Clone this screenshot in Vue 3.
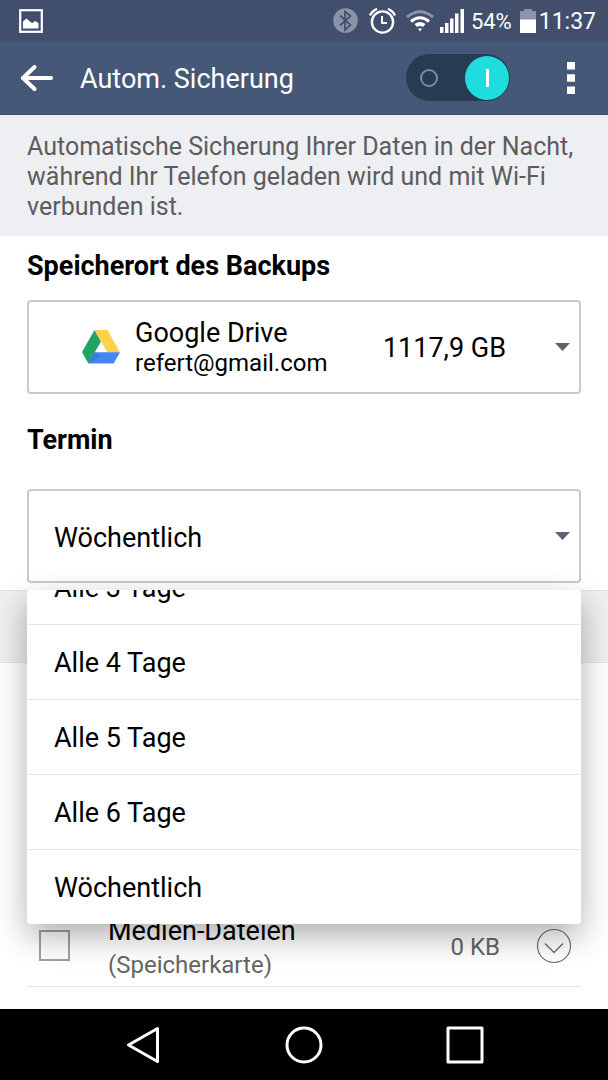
<script setup>
import { ref } from 'vue'

const enabled = ref(true)
const media = ref(false)
const open = ref(true)
const schedule = ref('Wöchentlich')
const options = ['Alle 3 Tage', 'Alle 4 Tage', 'Alle 5 Tage', 'Alle 6 Tage', 'Wöchentlich']

function pick(option) {
  schedule.value = option
  open.value = false
}
</script>

<template>
  <div class="screen">
    <div class="status">
      <svg class="picture" width="24" height="24" viewBox="0 0 24 24" aria-hidden="true">
        <rect x="1.2" y="1.2" width="21.6" height="21.6" fill="none" stroke="#fff" stroke-width="2.2" />
        <path d="M4 19.500V12.500L7.500 9.500l4.500 4 1.500.500L16 12l3.500 2v5.500z" fill="#fff" />
      </svg>
      <div class="indicators">
        <svg width="25" height="25" viewBox="0 0 25 25" aria-hidden="true">
          <circle cx="12.500" cy="12.500" r="12.300" fill="#8b93a8" />
          <path d="M7 7.500l10.500 9.500-5.500 5V3.500l5.500 4.500L7 17.500" fill="none" stroke="#414f6c" stroke-width="1.700" />
        </svg>
        <svg class="alarm" width="27" height="26" viewBox="0 0 27 26" fill="none" stroke="#fff" aria-hidden="true">
          <circle cx="13.500" cy="14" r="10.600" stroke-width="2.400" />
          <path d="M1 7.500Q3 3 8 1M26 7.500Q24 3 19 1" stroke-width="2.400" />
          <path d="M13 8v7h5" stroke-width="2" />
        </svg>
        <svg class="wifi" width="28" height="22" viewBox="0 0 28 22" fill="none" aria-hidden="true">
          <path d="M1 7Q14-3.500 27 7" stroke="#8b93a8" stroke-width="3" />
          <path d="M5 11.500Q14 4 23 11.500" stroke="#fff" stroke-width="3" />
          <path d="M8.500 14Q14 10 19.500 14L17 17Q14 15 11 17z" fill="#fff" />
          <path d="M12 18.500h4l-2 3z" fill="#fff" />
        </svg>
        <svg class="signal" width="24" height="24" viewBox="0 0 24 24" fill="#fff" aria-hidden="true">
          <path d="M0 18h3.500v6H0zM5 14h3.500v10H5zM10 9.500h3.500V24H10zM15 4.500h3.500V24H15zM20.500 0H24v24h-3.500z" />
        </svg>
        <span class="percent">54%</span>
        <svg class="battery" width="16" height="24" viewBox="0 0 16 24" aria-hidden="true">
          <path d="M0 2h4V0h8v2h4v9H0z" fill="#8b93a8" />
          <path d="M0 10.500h16V24H0z" fill="#fff" />
        </svg>
        <span class="clock">11:37</span>
      </div>
    </div>

    <header class="bar">
      <button class="icon-button" type="button" aria-label="Zurück">
        <svg width="34" height="28" viewBox="0 0 34 28" fill="none" stroke="#fff" stroke-width="4" stroke-linecap="round" aria-hidden="true">
          <path d="M14.500 3L3 14l11.500 11" stroke-linejoin="round" />
          <path d="M3 14h28" />
        </svg>
      </button>
      <h1>Autom. Sicherung</h1>
      <label class="switch">
        <input v-model="enabled" type="checkbox" role="switch" aria-label="Autom. Sicherung" />
        <span class="off-mark"></span>
        <span class="knob"></span>
      </label>
      <button class="icon-button more" type="button" aria-label="Weitere Optionen">
        <svg width="8" height="32" viewBox="0 0 8 32" fill="#fff" aria-hidden="true">
          <path d="M0 0h8v7.500H0zM0 12.200h8v7.600H0zM0 24.500h8V32H0z" />
        </svg>
      </button>
    </header>

    <main>
      <p class="intro">Automatische Sicherung Ihrer Daten in der Nacht, während Ihr Telefon geladen wird und mit Wi-Fi verbunden ist.</p>

      <section class="field">
        <h2 id="location">Speicherort des Backups</h2>
        <button class="box storage" type="button" aria-haspopup="listbox" aria-describedby="location">
          <svg width="38" height="34" viewBox="0 0 38 34" aria-hidden="true">
            <path d="M12.500 0L0 22l6.300 11.500L19 11.500z" fill="#1fa463" />
            <path d="M12.500 0h13L38 22.500H25.500z" fill="#ffd04b" />
            <path d="M12.500 22.300H38l-6.300 11.200H6.300z" fill="#4387f5" />
            <path d="M12.500 22.300l6 4.500-12.200 6.700z" fill="#3b78e0" />
          </svg>
          <span class="account">
            <span>Google Drive</span>
            <span class="mail">refert@gmail.com</span>
          </span>
          <span class="size">1117,9 GB</span>
          <span class="caret"></span>
        </button>
      </section>

      <section class="field schedule">
        <h2><label for="schedule">Termin</label></h2>
        <div class="anchor">
          <select id="schedule" v-model="schedule" class="box" @mousedown.prevent="open = !open">
            <option v-for="option in options" :key="option">{{ option }}</option>
          </select>
          <span class="caret"></span>
          <div v-if="open" class="popup">
            <div class="menu" role="listbox" aria-label="Termin">
              <button
                v-for="option in options"
                :key="option"
                type="button"
                role="option"
                :aria-selected="option === schedule"
                @click="pick(option)"
              >{{ option }}</button>
            </div>
          </div>
        </div>
      </section>

      <div class="divider"></div>

      <section class="items">
        <div class="item">
          <input id="media" v-model="media" type="checkbox" />
          <label for="media">Medien-Dateien<small>(Speicherkarte)</small></label>
          <span class="amount">0 KB</span>
          <button class="icon-button" type="button" aria-label="Details anzeigen">
            <svg width="36" height="36" viewBox="0 0 36 36" fill="none" stroke="#707070" aria-hidden="true">
              <circle cx="18" cy="18" r="16.500" stroke-width="1.200" />
              <path d="M9 15.500l9 9 9-9" stroke-width="1.500" />
            </svg>
          </button>
        </div>
      </section>
    </main>

    <nav class="keys">
      <button class="icon-button" type="button" aria-label="Zurück">
        <svg width="38" height="38" viewBox="0 0 38 38" fill="none" stroke="#fff" stroke-width="3" stroke-linejoin="round" aria-hidden="true">
          <path d="M33.500 2.500v33L4.500 19z" />
        </svg>
      </button>
      <button class="icon-button" type="button" aria-label="Startseite">
        <svg width="38" height="38" viewBox="0 0 38 38" fill="none" stroke="#fff" stroke-width="3" aria-hidden="true">
          <circle cx="19" cy="19" r="17" />
        </svg>
      </button>
      <button class="icon-button" type="button" aria-label="Übersicht">
        <svg width="38" height="38" viewBox="0 0 38 38" fill="none" stroke="#fff" stroke-width="3" stroke-linejoin="round" aria-hidden="true">
          <path d="M2 2h34v34H2z" />
        </svg>
      </button>
    </nav>
  </div>
</template>

<style>
body {
  margin: 0;
}
</style>

<style scoped>
* {
  box-sizing: border-box;
}

.screen {
  display: flex;
  flex-direction: column;
  min-height: 100vh;
  background: #fff;
  color: #000;
  font-family: Roboto, "Liberation Sans", sans-serif;
  font-size: 27px;
}

button,
select {
  font: inherit;
  color: inherit;
}

svg {
  display: block;
  flex: none;
}

.icon-button {
  display: block;
  padding: 0;
  border: 0;
  background: none;
}

.status {
  display: flex;
  align-items: center;
  justify-content: space-between;
  height: 41px;
  padding: 0 12px 0 19px;
  background: #414f6c;
  color: #fff;
}

.indicators {
  display: flex;
  align-items: center;
}

.alarm {
  margin-left: 11px;
}

.wifi {
  margin-left: 10px;
}

.signal {
  margin-left: 6px;
}

.percent {
  margin-left: 7px;
  padding-top: 2px;
  font-size: 22px;
}

.battery {
  margin-left: 8px;
}

.clock {
  margin-left: 3px;
  padding-top: 2px;
  font-size: 23px;
}

.bar {
  display: flex;
  align-items: center;
  height: 74px;
  padding: 0 33px 0 20px;
  border-bottom: 1px solid #3b4b6a;
  background: #465878;
  color: #fff;
}

h1 {
  flex: 1;
  margin: 0 0 0 26px;
  padding-top: 2px;
  font-size: 27px;
  font-weight: 400;
  line-height: 32px;
}

.switch {
  display: flex;
  align-items: center;
  justify-content: space-between;
  position: relative;
  width: 104px;
  height: 47px;
  padding: 0 1px 0 14px;
  border-radius: 24px;
  background: #273c53;
}

.switch input {
  position: absolute;
  inset: 0;
  width: 100%;
  height: 100%;
  margin: 0;
  opacity: 0;
}

.off-mark {
  width: 18px;
  height: 18px;
  border: 2px solid #7f8b9b;
  border-radius: 50%;
}

.knob {
  display: grid;
  place-items: center;
  width: 44px;
  height: 44px;
  border-radius: 50%;
  background: #1fdddd;
}

.knob::before {
  content: "";
  width: 3px;
  height: 18px;
  background: #fff;
}

.more {
  margin-left: 57px;
}

main {
  display: flex;
  flex: 1;
  flex-direction: column;
}

.intro {
  margin: 0;
  padding: 17px 20px 14px 27px;
  background: #eeeff3;
  color: #5c5c5c;
  font-size: 25px;
  line-height: 30px;
}

.field {
  padding: 14px 27px 0;
}

h2 {
  margin: 0 0 18px;
  font-size: 27px;
  font-weight: 700;
  line-height: 32px;
}

.box {
  display: flex;
  align-items: center;
  width: 100%;
  height: 94px;
  border: 2px solid #c6cbd1;
  border-radius: 4px;
  background: #fff;
  text-align: left;
}

.storage {
  padding: 0 9px 0 53px;
}

.account {
  display: flex;
  flex: 1;
  flex-direction: column;
  margin-left: 15px;
  padding-top: 2px;
  line-height: 30px;
}

.mail {
  font-size: 24px;
}

.size {
  padding-top: 2px;
}

.caret {
  width: 15px;
  height: 8px;
  background: #5b6370;
  clip-path: polygon(0 0, 100% 0, 50% 100%);
}

.size + .caret {
  margin-left: 49px;
}

.schedule {
  padding-top: 30px;
  padding-bottom: 7px;
}

.schedule h2 {
  margin-bottom: 33px;
}

.anchor {
  position: relative;
}

select.box {
  padding: 3px 40px 0 25px;
  appearance: none;
}

.anchor > .caret {
  position: absolute;
  top: 43px;
  right: 11px;
  pointer-events: none;
}

.popup {
  position: absolute;
  z-index: 1;
  top: 101px;
  right: 0;
  left: 0;
  border-radius: 4px;
  box-shadow: 0 12px 32px rgba(0, 8, 0, 0.32);
}

.menu {
  display: flex;
  flex-direction: column;
  justify-content: flex-end;
  height: 334px;
  overflow: hidden;
  border-radius: 4px;
  background: #fff;
}

.menu button {
  flex: none;
  height: 75px;
  padding: 2px 27px 0;
  border: 0;
  border-top: 1px solid #e6e6e6;
  background: #fff;
  text-align: left;
}

.divider {
  height: 73px;
  border-top: 1px solid #e2e3e6;
  border-bottom: 1px solid #e2e3e6;
  background: #eeeff1;
}

.items {
  display: flex;
  flex: 1;
  flex-direction: column;
  justify-content: flex-end;
  padding: 0 27px 22px;
}

.item {
  display: flex;
  align-items: center;
  height: 82px;
  padding: 0 9px 0 12px;
  border-bottom: 1px solid #e6e6e6;
}

.item input {
  width: 31px;
  height: 31px;
  margin: 0;
  border: 2px solid #a0a0a0;
  appearance: none;
}

.item input:checked {
  background: #1fdddd;
}

.item label {
  display: flex;
  flex: 1;
  flex-direction: column;
  margin-left: 38px;
  padding-top: 4px;
  line-height: 34px;
}

.item small {
  color: #666;
  font-size: 24px;
}

.amount {
  margin-right: 36px;
  padding-top: 2px;
  color: #666;
  font-size: 24px;
}

.keys {
  display: flex;
  align-items: center;
  justify-content: center;
  gap: 123px;
  height: 71px;
  background: #000;
}
</style>
